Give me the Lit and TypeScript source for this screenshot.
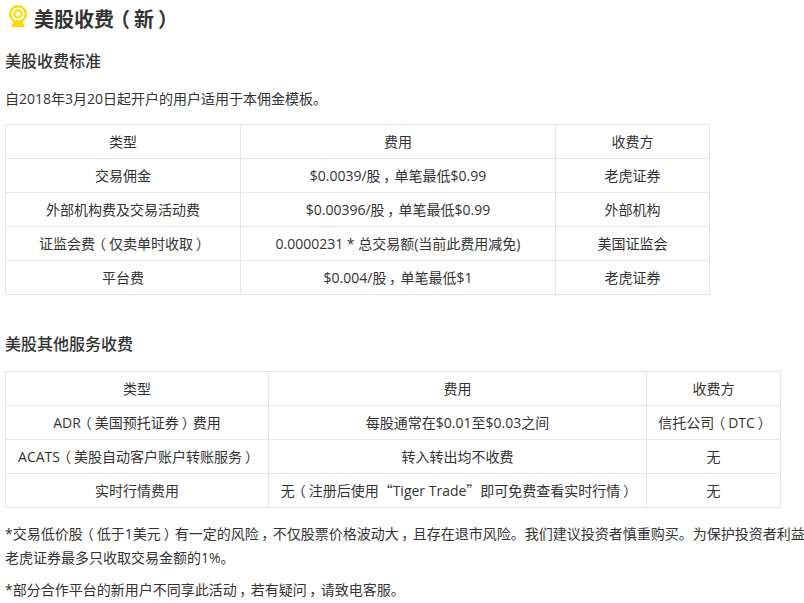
import { LitElement, html, css } from "lit";
import { customElement } from "lit/decorators.js";

type Row = string[];
const t1: Row[] = [
  ["类型", "费用", "收费方"],
  ["交易佣金", "$0.0039/股，单笔最低$0.99", "老虎证券"],
  ["外部机构费及交易活动费", "$0.00396/股，单笔最低$0.99", "外部机构"],
  ["证监会费（仅卖单时收取）", "0.0000231 * 总交易额(当前此费用减免)", "美国证监会"],
  ["平台费", "$0.004/股，单笔最低$1", "老虎证券"],
];
const t2: Row[] = [
  ["类型", "费用", "收费方"],
  ["ADR（美国预托证券）费用", "每股通常在$0.01至$0.03之间", "信托公司（DTC）"],
  ["ACATS（美股自动客户账户转账服务）", "转入转出均不收费", "无"],
  ["实时行情费用", "无（注册后使用“Tiger Trade”即可免费查看实时行情）", "无"],
];

const punct = (text: string) =>
  text.split(/([（），“”])/).map((part) => {
    if (/^[（），]$/.test(part)) return html`<span class="p">${part}</span>`;
    if (/^[“”]$/.test(part)) return html`<span class="q">${part}</span>`;
    return part;
  });

@customElement("app-root")
export class AppRoot extends LitElement {
  static styles = css`
    :host {
      display: block;
      width: 804px;
      height: 603px;
      overflow: hidden;
      background: #fff;
      color: #333;
      font-family: "Open Sans", "Noto Sans CJK SC", sans-serif;
      font-size: 14px;
    }
    .p {
      display: inline-block;
      width: 1em;
      text-align: center;
      font-family: "Noto Sans CJK SC", sans-serif;
      font-feature-settings: "palt";
    }
    .q { font-family: "Noto Sans CJK SC", sans-serif; }
    .title {
      display: flex;
      align-items: center;
      gap: 6px;
      height: 36px;
      padding-left: 8px;
    }
    .title svg { display: block; flex: none; }
    h1 { margin: 0; padding-top: 2px; font-size: 20px; font-weight: 700; line-height: 36px; color: #333; }
    h2 { margin: 0; padding-left: 5px; font-size: 16px; font-weight: 500; line-height: 24px; color: #333; }
    .h-a { margin-top: 13px; }
    .intro { margin: 16px 0 0; padding-left: 5px; line-height: 20px; }
    table {
      border-collapse: collapse;
      table-layout: fixed;
      margin-left: 5px;
    }
    td {
      border: 1px solid #e6e6e6;
      height: 33px;
      padding: 0;
      text-align: center;
      line-height: 20px;
      white-space: nowrap;
    }
    .t1 { width: 705px; margin-top: 15px; }
    .t2 { width: 775px; margin-top: 15px; }
    .h-b { margin-top: 37px; }
    .note { margin: 0; padding-left: 5px; line-height: 24px; white-space: nowrap; }
    .n1 { margin-top: 13px; }
    .n2 { margin-top: 7px; }
  `;

  private table(rows: Row[], cls: string, widths: number[]) {
    return html`<table class=${cls}>
      <colgroup>${widths.map((w) => html`<col style="width:${w}px" />`)}</colgroup>
      ${rows.map((r) => html`<tr>${r.map((c) => html`<td>${punct(c)}</td>`)}</tr>`)}
    </table>`;
  }

  render() {
    return html`
      <div class="title">
        <svg width="20" height="26" viewBox="0 0 20 26" fill="none">
          <circle cx="10" cy="9" r="7.8" stroke="#ffd900" stroke-width="2.4" />
          <circle cx="10" cy="9" r="3.6" stroke="#ffd900" stroke-width="2.2" />
          <path d="M5.5 16.5h9l2.5 5.5H3z" fill="#ffd900" />
        </svg>
        <h1>${punct("美股收费（新）")}</h1>
      </div>
      <h2 class="h-a">美股收费标准</h2>
      <p class="intro">自2018年3月20日起开户的用户适用于本佣金模板。</p>
      ${this.table(t1, "t1", [235, 315, 154])}
      <h2 class="h-b">美股其他服务收费</h2>
      ${this.table(t2, "t2", [263, 378, 134])}
      <p class="note n1">${punct("*交易低价股（低于1美元）有一定的风险，不仅股票价格波动大，且存在退市风险。我们建议投资者慎重购买。为保护投资者利益")}<br />老虎证券最多只收取交易金额的1%。</p>
      <p class="note n2">${punct("*部分合作平台的新用户不同享此活动，若有疑问，请致电客服。")}</p>
    `;
  }
}
